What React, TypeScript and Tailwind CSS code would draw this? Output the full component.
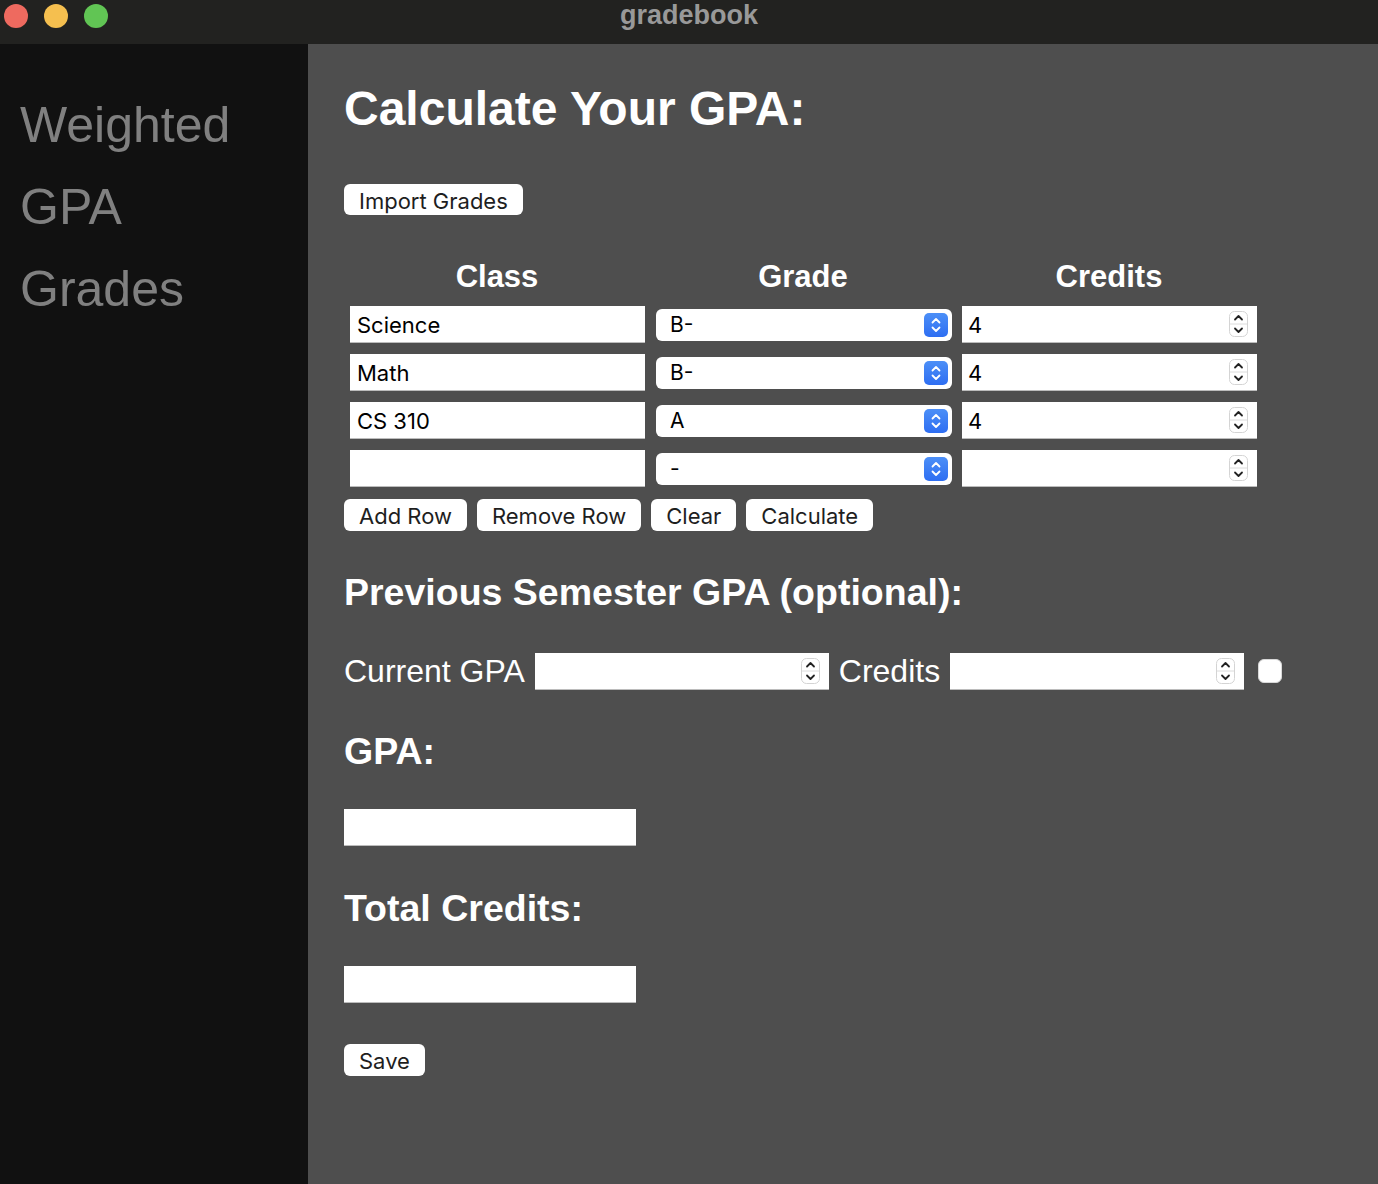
import React from 'react';

// spinner shown on the right of number inputs
const Spinner: React.FC = () => (
  <svg width="19" height="26" viewBox="0 0 19 26" className="shrink-0">
    <rect x="0.5" y="0.5" width="18" height="25" rx="5" fill="#fff" stroke="#d4d4d4" />
    <line x1="1" y1="13" x2="18" y2="13" stroke="#dcdcdc" />
    <path d="M6 8.5 L9.5 5 L13 8.5" fill="none" stroke="#222" strokeWidth="1.8" strokeLinecap="round" strokeLinejoin="round" />
    <path d="M6 17.5 L9.5 21 L13 17.5" fill="none" stroke="#222" strokeWidth="1.8" strokeLinecap="round" strokeLinejoin="round" />
  </svg>
);

const SelectArrow: React.FC = () => (
  <svg width="24" height="24" viewBox="0 0 24 24" className="shrink-0">
    <defs>
      <linearGradient id="blu" x1="0" y1="0" x2="0" y2="1">
        <stop offset="0" stopColor="#4c8ff7" />
        <stop offset="1" stopColor="#2e6ef2" />
      </linearGradient>
    </defs>
    <rect x="0" y="0" width="24" height="24" rx="5" fill="url(#blu)" />
    <path d="M8.5 9.5 L12 6 L15.5 9.5" fill="none" stroke="#fff" strokeWidth="1.8" strokeLinecap="round" strokeLinejoin="round" />
    <path d="M8.5 14.5 L12 18 L15.5 14.5" fill="none" stroke="#fff" strokeWidth="1.8" strokeLinecap="round" strokeLinejoin="round" />
  </svg>
);

const TextBox: React.FC<{ value?: string; width?: string }> = ({ value = '', width = 'w-[295px]' }) => (
  <div className={`${width} h-[37px] bg-white border-b border-[#bcbcbc] flex items-center px-[7px] pt-[3px]`}>
    <input
      readOnly
      value={value}
      className="w-full bg-transparent outline-none text-black text-[22px] font-['Inter',sans-serif]"
    />
  </div>
);

const NumberBox: React.FC<{ value?: string; width?: string }> = ({ value = '', width = 'w-[295px]' }) => (
  <div className={`${width} h-[37px] bg-white border-b border-[#bcbcbc] flex items-center pl-[6px] pr-[9px]`}>
    <input
      readOnly
      value={value}
      className="flex-1 min-w-0 pt-[3px] bg-transparent outline-none text-black text-[22px] font-['Inter',sans-serif]"
    />
    <Spinner />
  </div>
);

const GradeSelect: React.FC<{ value: string }> = ({ value }) => (
  <div className="w-[296px] h-[32px] bg-white rounded-[6px] flex items-center pl-[14px] pr-[4px]">
    <span className="flex-1 pt-[1px] text-black text-[21px] font-['Inter',sans-serif]">{value}</span>
    <SelectArrow />
  </div>
);

const Btn: React.FC<{ label: string; h?: string }> = ({ label, h = 'h-[32px]' }) => (
  <button className={`${h} px-[15px] pt-[2px] bg-white rounded-[6px] text-[#1e1e1e] text-[22px] leading-none font-['Inter',sans-serif]`}>
    {label}
  </button>
);

const rows = [
  { name: 'Science', grade: 'B-', credits: '4' },
  { name: 'Math', grade: 'B-', credits: '4' },
  { name: 'CS 310', grade: 'A', credits: '4' },
  { name: '', grade: '-', credits: '' },
];

const App: React.FC = () => {
  return (
    <div className="w-[1378px] h-[1184px] flex flex-col overflow-hidden font-['Liberation_Sans',Arial,sans-serif]">
      {/* title bar */}
      <div className="h-[44px] shrink-0 bg-[#222220] flex items-start relative">
        <div className="flex gap-[16px] pl-[4px] pt-[4px]">
          <span className="w-[24px] h-[24px] rounded-full bg-[#ee6a5f]"></span>
          <span className="w-[24px] h-[24px] rounded-full bg-[#f5bf4f]"></span>
          <span className="w-[24px] h-[24px] rounded-full bg-[#61c554]"></span>
        </div>
        <div className="absolute left-0 right-0 top-0 text-center text-[27px] leading-[30px] font-bold text-[#999999]">
          gradebook
        </div>
      </div>

      <div className="flex flex-1">
        {/* sidebar */}
        <aside className="w-[308px] shrink-0 bg-[#111111] pt-[40px] pl-[20px]">
          <div className="text-[50px] leading-[82px] text-[#808080]">Weighted</div>
          <div className="text-[50px] leading-[82px] text-[#808080]">GPA</div>
          <div className="text-[50px] leading-[82px] text-[#808080]">Grades</div>
        </aside>

        {/* main */}
        <main className="flex-1 bg-[#4e4e4e] pl-[36px] pt-[37px] text-white">
          <h1 className="text-[48px] leading-[56px] font-bold">Calculate Your GPA:</h1>

          <div className="mt-[47px]">
            <Btn label="Import Grades" h="h-[31px]" />
          </div>

          {/* grades table */}
          <div className="mt-[41px] w-[918px]">
            <div className="grid grid-cols-3 h-[40px] text-[31px] leading-[40px] font-bold text-center">
              <div>Class</div>
              <div>Grade</div>
              <div>Credits</div>
            </div>
            <div className="mt-[4px]">
              {rows.map((r, i) => (
                <div key={i} className="grid grid-cols-3 h-[48px] items-center">
                  <div className="pl-[6px]"><TextBox value={r.name} /></div>
                  <div className="pl-[6px]"><GradeSelect value={r.grade} /></div>
                  <div className="pl-[6px]"><NumberBox value={r.credits} /></div>
                </div>
              ))}
            </div>
          </div>

          <div className="mt-[6px] flex gap-[10px]">
            <Btn label="Add Row" />
            <Btn label="Remove Row" />
            <Btn label="Clear" />
            <Btn label="Calculate" />
          </div>

          <h2 className="mt-[39px] text-[37.5px] leading-[44px] font-bold">Previous Semester GPA (optional):</h2>

          <div className="mt-[39px] flex items-center h-[37px]">
            <span className="text-[32px] mr-[10px]">Current GPA</span>
            <NumberBox width="w-[294px]" />
            <span className="text-[32px] ml-[10px] mr-[10px]">Credits</span>
            <NumberBox width="w-[294px]" />
            <span className="ml-[14px] w-[24px] h-[24px] bg-white rounded-[6px] border border-[#d8d8d8]"></span>
          </div>

          <h2 className="mt-[39px] text-[37.5px] leading-[44px] font-bold">GPA:</h2>
          <div className="mt-[36px]">
            <TextBox width="w-[292px]" />
          </div>

          <h2 className="mt-[40px] text-[37.5px] leading-[44px] font-bold">Total Credits:</h2>
          <div className="mt-[36px]">
            <TextBox width="w-[292px]" />
          </div>

          <div className="mt-[41px]">
            <Btn label="Save" />
          </div>
        </main>
      </div>
    </div>
  );
};

export default App;
